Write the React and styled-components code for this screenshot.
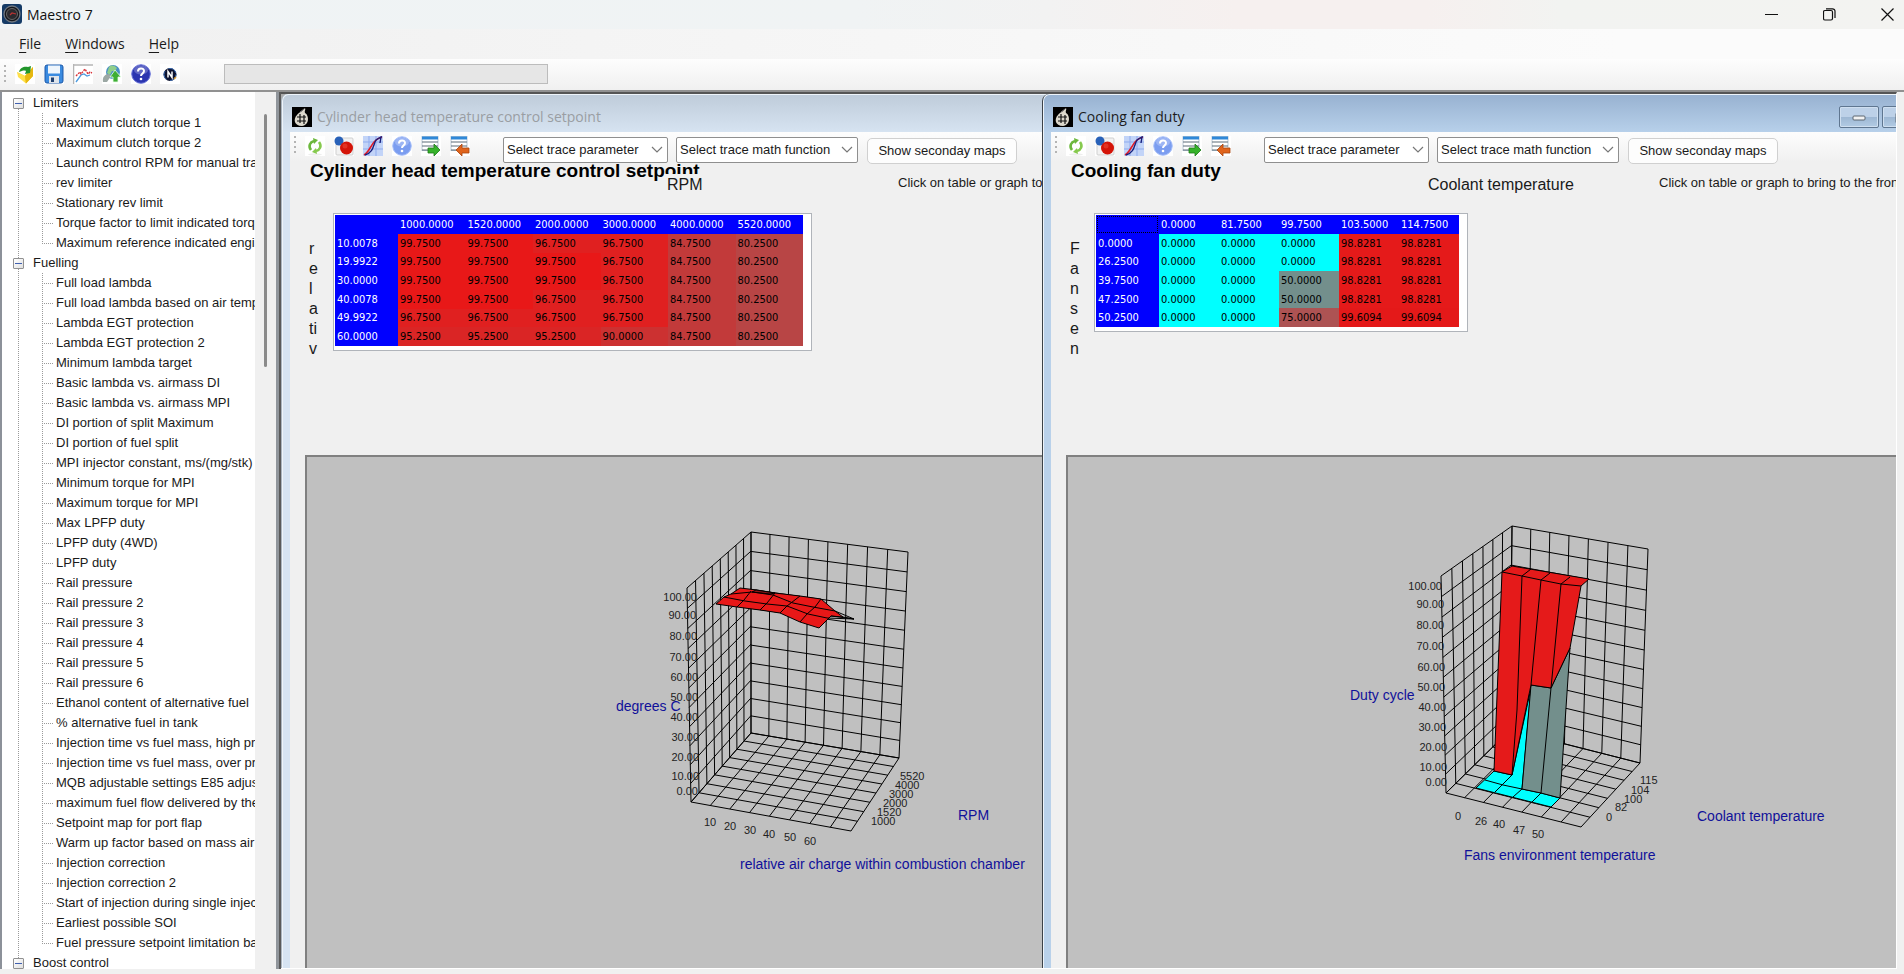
import React from "react";
import styled, { createGlobalStyle, css } from "styled-components";

const uiFont = `"Liberation Sans", Arial, sans-serif`;
const captionFont = `"Open Sans", "Noto Sans", sans-serif`;
const gridFont = `"DejaVu Sans Condensed", "DejaVu Sans", sans-serif`;

const GlobalStyle = createGlobalStyle`
  * { box-sizing: border-box; }
  body { margin: 0; background: #f0f0f0; font: 13px/20px ${uiFont}; color: #1a1a1a; }
  button, select { font: inherit; color: inherit; }
  ul { list-style: none; margin: 0; padding: 0; }
`;

const Frame = styled.div`
  display: flex;
  flex-direction: column;
  height: 100vh;
  overflow: hidden;
`;

const TitleBar = styled.header`
  display: flex;
  align-items: center;
  flex: none;
  height: 29px;
  padding: 0 1px 2px 2px;
  background: linear-gradient(90deg, #eff3f5 0%, #f0f3f4 45%, #f2f2f2 55%, #f6f0ef 65%, #f6f0ef 75%, #f2f3f1 82%, #f3f3f1 100%);
`;

const AppName = styled.h1`
  flex: 1;
  margin: 0 0 0 5px;
  padding-top: 2px;
  font: 400 14px/20px ${captionFont};
  color: #111;
`;

const CaptionButtons = styled.div`
  display: flex;
  gap: 26px;
`;

const CaptionButton = styled.button`
  display: flex;
  align-items: center;
  justify-content: center;
  width: 32px;
  height: 24px;
  padding: 2px 0 0;
  border: 0;
  background: transparent;
`;

const MenuBar = styled.nav`
  display: flex;
  flex: none;
  align-items: center;
  gap: 2px;
  height: 30px;
  padding-left: 8px;
  background: linear-gradient(90deg, #f0f0f0, #fbfbfb 85%);
`;

const MenuButton = styled.button`
  padding: 0 11px;
  border: 0;
  background: transparent;
  font: 14px/24px ${captionFont};

  u { text-underline-offset: 3px; }
`;

const MainToolbar = styled.div`
  display: flex;
  flex: none;
  align-items: center;
  height: 33px;
  padding: 0 0 1px 4px;
  border-bottom: 2px solid #919191;
  background: linear-gradient(#fdfdfd, #f0f0f0);
`;

const Grip = styled.span`
  width: 2px;
  height: 18px;
  background: repeating-linear-gradient(#b4b4b4 0 2px, transparent 2px 5px);
`;

const IconGroup = styled.div`
  display: flex;
  gap: 9px;
  margin: 0 ${(p) => p.$after}px 0 9px;
`;

const IconButton = styled.button`
  display: flex;
  width: 20px;
  height: 20px;
  padding: 0;
  border: 0;
  background: #fff;
`;

const Progress = styled.div`
  width: 324px;
  height: 20px;
  border: 1px solid #bcbcbc;
  background: #e6e6e6;
`;

const Workspace = styled.div`
  display: flex;
  flex: 1;
  min-height: 0;
  padding: 0 7px 5px 0;
`;

const Sidebar = styled.aside`
  display: flex;
  flex: none;
  width: 276px;
  border-left: 2px solid #8c9199;
  background: #f0f0f0;
`;

const Tree = styled.ul`
  flex: 1;
  min-width: 0;
  padding-top: 1px;
  overflow: hidden;
  background: #fff;
`;

const TreeGroup = styled.li`
  background: repeating-linear-gradient(#9a9a9a 0 1px, transparent 1px 2px) no-repeat 16px
    ${(p) => (p.$first ? "10px" : "0")} / 1px ${(p) => (p.$last ? "10px" : "100%")};
`;

const GroupLabel = styled.div`
  display: flex;
  align-items: center;
  height: 20px;
  padding-left: 11px;
`;

const Toggle = styled.button`
  display: flex;
  align-items: center;
  justify-content: center;
  width: 11px;
  height: 11px;
  margin-right: 9px;
  padding: 0;
  border: 1px solid #919191;
  border-radius: 1px;
  background: linear-gradient(135deg, #fff, #e0e0e0);

  &::before {
    content: "";
    width: 7px;
    height: 1px;
    background: #4060b0;
  }
`;

const Leaf = styled.li`
  height: 20px;
  margin-left: 40px;
  padding-left: 14px;
  white-space: nowrap;
  background:
    repeating-linear-gradient(#9a9a9a 0 1px, transparent 1px 2px) no-repeat 0 0 / 1px 100%,
    repeating-linear-gradient(90deg, #9a9a9a 0 1px, transparent 1px 2px) no-repeat 2px 10px / 10px 1px;

  &:last-child {
    background-size: 1px 11px, 10px 1px;
  }
`;

const ScrollTrack = styled.div`
  flex: none;
  width: 21px;
  padding: 22px 0 0 9px;
`;

const ScrollThumb = styled.div`
  width: 3px;
  height: 253px;
  border-radius: 2px;
  background: #8a8a8a;
`;

const Splitter = styled.div`
  flex: none;
  width: 5px;
  border-left: 3px solid #90959b;
  background: #5a5a5a;
`;

const Desktop = styled.main`
  position: relative;
  flex: 1;
  min-width: 0;
  overflow: hidden;
  border-top: 2px solid #555;
  border-right: 1px solid #fff;
  border-bottom: 1px solid #fff;
  background: #ababab;
`;

const ChildWindow = styled.section`
  position: absolute;
  top: 0;
  bottom: 0;
  left: ${(p) => p.$left}px;
  display: flex;
  flex-direction: column;
  width: 938px;
  border-left: 1px solid ${(p) => (p.$active ? "#3c4248" : "#aab4be")};
  border-radius: 7px 7px 0 0;
  background: ${(p) => (p.$active ? "#b9d1ea" : "#d7e4f2")};
  box-shadow: inset 1px 1px 0 #eef4fa;
`;

const WindowTitle = styled.header`
  display: flex;
  flex: none;
  align-items: center;
  gap: 5px;
  height: 37px;
  margin: 1px 1px 0;
  padding: 7px 14px 0 9px;
  border-radius: 6px 6px 0 0;
  background: ${(p) =>
    p.$active ? "linear-gradient(#98b2d1, #b7d0ea)" : "linear-gradient(#bfccda, #d6e3f1)"};

  h2 {
    flex: 1;
    margin: 0;
    font: 400 14px/24px ${captionFont};
    color: ${(p) => (p.$active ? "#1c1c1c" : "#9a9ea3")};
  }
`;

const FrameButtons = styled.div`
  display: flex;
  gap: 3px;
`;

const FrameButton = styled.button`
  display: flex;
  align-items: center;
  justify-content: center;
  width: 40px;
  height: 22px;
  padding: 2px 0 0;
  border: 1px solid #5f7690;
  border-radius: 2px;
  background: linear-gradient(#bdd1e8 50%, #9db7d3 50%, #b2cbe4);
  box-shadow: inset 0 0 0 1px #cfdff0;
`;

const WindowBody = styled.div`
  display: flex;
  flex: 1;
  flex-direction: column;
  min-height: 0;
  margin: 0 8px;
  background: #f0f0f0;
`;

const MapToolbar = styled.div`
  display: flex;
  flex: none;
  align-items: flex-start;
  height: 30px;
  padding: 4px 0 0 4px;
  background: linear-gradient(#fdfdfd, #f0f0f0);
`;

const ComboBox = styled.div`
  display: grid;
  flex: none;
  width: ${(p) => p.$width}px;
  height: 26px;
  margin: 1px 8px 0 0;

  select, svg { grid-area: 1 / 1; }
  select {
    appearance: none;
    width: 100%;
    padding: 0 20px 1px 3px;
    border: 1px solid #8f8f8f;
    border-radius: 2px;
    background: #fff;
  }
  svg {
    align-self: center;
    justify-self: end;
    margin-right: 5px;
    pointer-events: none;
  }
`;

const PushButton = styled.button`
  flex: none;
  width: 150px;
  height: 26px;
  margin: 2px 0 0 1px;
  padding: 0;
  border: 1px solid #d0d0d0;
  border-radius: 5px;
  background: #fdfdfd;
`;

const MapHeading = styled.h3`
  flex: none;
  margin: 0 0 0 20px;
  font: 700 19px/18px ${uiFont};
  color: #000;
`;

const AxisRow = styled.div`
  position: relative;
  display: flex;
  flex: none;
  height: 20px;
  margin: -6px 0 0 374px;
  white-space: nowrap;
`;

const ColumnAxis = styled.span`
  width: 234px;
  padding-left: 3px;
  background: #f0f0f0;
  font-size: 16px;
  line-height: 22px;
`;

const Hint = styled.span`
  line-height: 18px;
`;

const MapArea = styled.div`
  display: flex;
  flex: none;
  align-items: flex-start;
  height: 261px;
  padding: 19px 0 0 19px;
`;

const RowAxis = styled.div`
  display: flex;
  flex-direction: column;
  width: 24px;
  padding-top: 26px;
  font-size: 16px;
`;

const TableFrame = styled.div`
  padding: 1px 8px 4px 1px;
  border: 1px solid #b0b4ba;
  background: #fff;
`;

const MapTable = styled.table`
  width: ${(p) => p.$width}px;
  height: ${(p) => p.$height}px;
  border-collapse: collapse;
  table-layout: fixed;
  font: 11px/17px ${gridFont};
  color: #000;

  th, td { padding: 0 0 0 2px; text-align: left; font-weight: 400; }
  th { background: #00f; color: #fff; }
  th:first-child { width: 63px; }
  thead tr { height: 19px; }
`;

const CornerCell = styled.th`
  ${(p) =>
    p.$focused &&
    css`
      outline: 1px dotted #000;
      outline-offset: -2px;
    `}
`;

const ValueCell = styled.td`
  background: ${(p) => p.$tone};
`;

const GraphPanel = styled.div`
  flex: 1;
  min-height: 0;
  margin-left: 15px;
  overflow: hidden;
  border: solid #808080;
  border-width: 2px 0 0 2px;
  background: #c0c0c0;
`;

const Chart = styled.svg`
  display: block;

  .grid, .edge { fill: none; stroke: #000; stroke-width: 1; }
  .face { stroke: #000; stroke-width: 1; }
  .tick { font: 11px ${uiFont}; fill: #222; }
  .axis { font: 14px ${uiFont}; fill: #10109a; }
`;

/* ---------- icons ---------- */

const AppIcon = () => (
  <svg width="20" height="20" viewBox="0 0 20 20" aria-hidden="true">
    <rect width="20" height="20" rx="3" fill="#143a66" />
    <circle cx="10" cy="10" r="8" fill="#15171c" stroke="#6f7780" strokeWidth="1.3" />
    <circle cx="10" cy="10" r="5.5" fill="#2a2a2e" stroke="#666" />
    <path d="M8 11l2-2 4 1" stroke="#b33" strokeWidth="1.2" fill="none" />
  </svg>
);

const OpenIcon = () => (
  <svg width="20" height="20" viewBox="0 0 20 20" aria-hidden="true">
    <path d="M2 8l8 4 8-9v9l-7 7.500z" fill="#f0c818" />
    <path d="M2 8l8 4 1 7.500L3 13z" fill="#ffe04a" />
    <path d="M10 12l8-9v9l-7 7.500z" fill="#e6b810" />
    <path d="M4 8c1-5 6-6 9-5l3-1-1 7-5 1 1-3c-2-1-4 0-7 1z" fill="#22962c" />
  </svg>
);

const SaveIcon = () => (
  <svg width="20" height="20" viewBox="0 0 20 20" aria-hidden="true">
    <rect x="1" y="1" width="18" height="18" rx="2" fill="#3b8be0" stroke="#1c57a6" />
    <rect x="4" y="1.500" width="12" height="8" fill="#eef5fc" />
    <rect x="5" y="12" width="10" height="7" fill="#dfe4ea" />
    <rect x="7" y="13.500" width="3" height="4.500" fill="#1f3f70" />
  </svg>
);

const TraceIcon = () => (
  <svg width="20" height="20" viewBox="0 0 20 20" aria-hidden="true">
    <path d="M0 1h20M0.500 0v20" stroke="#b5b5b5" strokeWidth="1.5" />
    <path d="M3 18l5-7 3-1 3 2 3-1" stroke="#4a9be0" strokeWidth="1.3" fill="none" />
    <path d="M3 12l4-4 1 2 4-5 3 5 2-2 2 1" stroke="#d8333a" strokeWidth="1.4" fill="none" strokeDasharray="2 1" />
  </svg>
);

const WorldIcon = () => (
  <svg width="20" height="20" viewBox="0 0 20 20" aria-hidden="true">
    <circle cx="11" cy="8" r="7" fill="#4a8fc4" />
    <path d="M7 3c3-3 6-1 8 1l-2 3-3 0-2 4-3-2z" fill="#8fce8a" />
    <path d="M1 18c-1-5 2-8 6-8l2 2-4 6z" fill="#9ca8a4" />
    <path d="M13 6l6 7h-3v5h-5v-5H8z" fill="#3fae35" stroke="#e8ffe8" strokeWidth="0.800" />
  </svg>
);

const HelpIcon = ({ pale }) => (
  <svg width="20" height="20" viewBox="0 0 20 20" aria-hidden="true">
    <circle cx="10" cy="10" r="9.300" fill={pale ? "#7b9df0" : "#2b35b0"} stroke={pale ? "#a9c0f8" : "#6a74d8"} />
    <ellipse cx="10" cy="6" rx="7" ry="4.500" fill="#fff" opacity="0.250" />
    <path d="M7 7.500c0-4 6-4 6-.500 0 2.500-3 2.500-3 5" fill="none" stroke="#fff" strokeWidth="2" />
    <circle cx="10" cy="15" r="1.300" fill="#fff" />
  </svg>
);

const SyncIcon = () => (
  <svg width="20" height="20" viewBox="0 0 20 20" aria-hidden="true">
    <circle cx="10" cy="10.500" r="6.500" fill="#0e1430" />
    <circle cx="10" cy="10.500" r="6" fill="none" stroke="#3c6fb8" strokeDasharray="9 4" />
    <path d="M8 13.500v-6l4 6v-6" stroke="#fff" strokeWidth="1.500" fill="none" />
    <path d="M14 15l2-2" stroke="#d89c30" strokeWidth="1.5" />
  </svg>
);

const RefreshIcon = () => (
  <svg width="20" height="20" viewBox="0 0 20 20" aria-hidden="true">
    <ellipse cx="10" cy="18.500" rx="7" ry="1.200" fill="#eee" />
    <path d="M6 14c-3-4-1-8 3-9" fill="none" stroke="#6cb83c" strokeWidth="2.600" />
    <path d="M8 2l5 2-4 4z" fill="#6cb83c" />
    <path d="M14 6c3 4 1 8-3 9" fill="none" stroke="#86c94e" strokeWidth="2.600" />
    <path d="M12 18l-5-2 4-4z" fill="#86c94e" />
  </svg>
);

const SpheresIcon = () => (
  <svg width="20" height="20" viewBox="0 0 20 20" aria-hidden="true">
    <rect x="2" y="2" width="17" height="17" rx="1" fill="#f2f2f2" stroke="#cfcfcf" />
    <circle cx="5" cy="5" r="4.500" fill="#2861b8" />
    <circle cx="12.500" cy="12" r="6.500" fill="#d41408" />
    <circle cx="11" cy="10" r="2.500" fill="#f0503c" opacity="0.500" />
  </svg>
);

const CurvesIcon = () => (
  <svg width="20" height="20" viewBox="0 0 20 20" aria-hidden="true">
    <rect width="20" height="20" fill="#c2d4f8" />
    <path d="M0 6h20M0 13h20M6 0v20M13 0v20" stroke="#8fabee" />
    <path d="M1 19C8 15 8 4 19 1" stroke="#e01c28" strokeWidth="1.600" fill="none" />
    <path d="M2 19c9-3 8-10 11-15l5-3-1 6" stroke="#18207c" strokeWidth="1.400" fill="none" />
  </svg>
);

const SheetIcon = ({ back }) => (
  <svg width="20" height="20" viewBox="0 0 20 20" aria-hidden="true">
    <rect x="1" y="0.500" width="16" height="14" fill="#fff" stroke="#b9c8d4" />
    <path d="M1 2h16" stroke="#2f88d8" strokeWidth="3" />
    <path d="M1 6h16M1 10h16M1 14h16" stroke="#5d6c78" strokeWidth="1.200" />
    {back ? (
      <path d="M6 14l6-6v4h7v5h-7v3z" fill="#e0641c" stroke="#a8440c" strokeWidth="0.800" />
    ) : (
      <path d="M19 14l-6-6v4H7v5h6v3z" fill="#36b22a" stroke="#1c7a18" strokeWidth="0.800" />
    )}
  </svg>
);

const MapIcon = () => (
  <svg width="20" height="20" viewBox="0 0 20 20" aria-hidden="true">
    <rect width="20" height="20" fill="#000" />
    <path d="M13 1c1 2-1 3 0 5 4 2 5 12-3 13-8 0-9-7-5-11C7 5 10 5 13 1z" fill="#dcd8cc" />
    <path d="M5 10h9M5 14h9M8 7v9M12 8v9" stroke="#111" strokeWidth="1.200" />
    <path d="M8 5l4-3" stroke="#777" />
  </svg>
);

const Chevron = () => (
  <svg width="12" height="8" viewBox="0 0 12 8" aria-hidden="true">
    <path d="M1 1l5 5 5-5" fill="none" stroke="#777" strokeWidth="1.200" />
  </svg>
);

/* ---------- graph ---------- */

const bow = (t, k) => t + k * t * (1 - t);
const mix = (a, b, t) => [a[0] + (b[0] - a[0]) * t, a[1] + (b[1] - a[1]) * t];

// A quad [origin, end of u, end of v, far corner] ruled into nu by nv cells.
function ruledQuad([o, u, v, f], nu, nv, ku, kv) {
  const lines = [];
  for (let i = 0; i <= nu; i++) {
    const t = bow(i / nu, ku);
    lines.push([mix(o, u, t), mix(v, f, t)]);
  }
  for (let j = 0; j <= nv; j++) {
    const t = bow(j / nv, kv);
    lines.push([mix(o, v, t), mix(u, f, t)]);
  }
  return lines.map(([a, b]) => `M${a}L${b}`).join("");
}

function Cage({ backTop, rightTop, leftTop, back, right, left, front, n }) {
  return (
    <path
      className="grid"
      d={
        ruledQuad([backTop, rightTop, back, right], n, 11, -0.04, 0.07) +
        ruledQuad([backTop, leftTop, back, left], n, 11, -0.08, 0.05) +
        ruledQuad([back, right, left, front], n, n, -0.04, -0.08)
      }
    />
  );
}

const TemperatureGraph = () => (
  <Chart width="750" height="520" viewBox="307 457 750 520" role="img" aria-label="Cylinder head temperature graph">
    <g transform="translate(600 510)">
      <Cage
        n={8}
        backTop={[151, 22]}
        rightTop={[308, 42]}
        leftTop={[87, 78]}
        back={[151, 223]}
        right={[299, 248]}
        left={[91, 292]}
        front={[251, 321]}
      />
      <path
        className="face"
        fill="#e81818"
        d="M116 94L124 87L131 84L140 78L157 80L175 83L200 86L221 89L235 101L243 107L231 106L219 118L200 112L180 103L160 100L137 97Z"
      />
      <path className="face" fill="#8c1616" d="M156 80L175 83L170 84L152 82Z" />
      <path
        className="edge"
        d="M124 87L145 91L167 94L187 96L208 104L227 108L254 109L243 107M131 84L152 82L173 85L193 93L213 97L235 101L254 109M137 97L144 90L151 81M160 100L167 93L175 83M180 103L187 96L200 86M200 112L207 104L215 97L221 89M231 106L254 109"
      />
      {[
        ["100.00", 97, 91], ["90.00", 96, 109], ["80.00", 97, 130], ["70.00", 97, 151], ["60.00", 98, 171],
        ["50.00", 98, 191], ["40.00", 98, 211], ["30.00", 99, 231], ["20.00", 99, 251], ["10.00", 99, 270], ["0.00", 98, 285],
      ].map(([t, x, y]) => (
        <text key={t} className="tick" textAnchor="end" x={x} y={y}>{t}</text>
      ))}
      {[["10", 104, 316], ["20", 124, 320], ["30", 144, 324], ["40", 163, 328], ["50", 184, 331], ["60", 204, 335]].map(([t, x, y]) => (
        <text key={t} className="tick" x={x} y={y}>{t}</text>
      ))}
      {[["5520", 300, 270], ["4000", 295, 279], ["3000", 289, 288], ["2000", 283, 297], ["1520", 277, 306], ["1000", 271, 315]].map(([t, x, y]) => (
        <text key={t} className="tick" x={x} y={y}>{t}</text>
      ))}
      <text className="axis" x="16" y="201">degrees C</text>
      <text className="axis" x="358" y="310">RPM</text>
      <text className="axis" x="140" y="359">relative air charge within combustion chamber</text>
    </g>
  </Chart>
);

const FanGraph = () => (
  <Chart width="860" height="520" viewBox="1068 457 860 520" role="img" aria-label="Cooling fan duty graph">
    <g transform="translate(1330 510)">
      <Cage
        n={7}
        backTop={[182, 16]}
        rightTop={[318, 39]}
        leftTop={[111, 66]}
        back={[180, 220]}
        right={[310, 253]}
        left={[116, 283]}
        front={[251, 317]}
      />
      <path className="face" fill="#00ffff" d="M146 278L164 261L182 265L201 178L192 279L211 283L230 288L221 297Z" />
      <path className="edge" d="M155 270L173 275L192 279M165 282L182 265M183 287L192 279M202 292L211 283" />
      <path className="face" fill="#738f8c" d="M201 175L221 178L240 138L230 288L211 283L192 279Z" />
      <path className="edge" d="M211 283L221 178" />
      <path
        className="face"
        fill="#e51a1a"
        d="M182 56L259 69L251 76L245 110L240 138L221 178L201 175L182 265L164 261L172 62Z"
      />
      <path
        className="edge"
        d="M172 62L192 66L211 70L231 74L251 76M192 66L201 59M211 70L220 63M231 74L240 67M192 66L187 200L182 265M211 70L201 175M231 74L221 178"
      />
      {[
        ["100.00", 112, 80], ["90.00", 114, 98], ["80.00", 114, 119], ["70.00", 114, 140], ["60.00", 115, 161],
        ["50.00", 115, 181], ["40.00", 116, 201], ["30.00", 116, 221], ["20.00", 117, 241], ["10.00", 117, 261], ["0.00", 117, 276],
      ].map(([t, x, y]) => (
        <text key={t} className="tick" textAnchor="end" x={x} y={y}>{t}</text>
      ))}
      {[["0", 125, 310], ["26", 145, 315], ["40", 163, 318], ["47", 183, 324], ["50", 202, 328]].map(([t, x, y]) => (
        <text key={t} className="tick" x={x} y={y}>{t}</text>
      ))}
      {[["115", 310, 274], ["104", 301, 284], ["100", 294, 293], ["82", 285, 301], ["0", 276, 311]].map(([t, x, y]) => (
        <text key={t} className="tick" x={x} y={y}>{t}</text>
      ))}
      <text className="axis" x="20" y="190">Duty cycle</text>
      <text className="axis" x="367" y="311">Coolant temperature</text>
      <text className="axis" x="134" y="350">Fans environment temperature</text>
    </g>
  </Chart>
);

/* ---------- data ---------- */

const tree = [
  {
    name: "Limiters",
    items: [
      "Maximum clutch torque 1", "Maximum clutch torque 2", "Launch control RPM for manual transmission", "rev limiter",
      "Stationary rev limit", "Torque factor to limit indicated torque", "Maximum reference indicated engine torque",
    ],
  },
  {
    name: "Fuelling",
    items: [
      "Full load lambda", "Full load lambda based on air temperature", "Lambda EGT protection", "Lambda EGT protection 2",
      "Minimum lambda target", "Basic lambda vs. airmass DI", "Basic lambda vs. airmass MPI", "DI portion of split Maximum",
      "DI portion of fuel split", "MPI injector constant, ms/(mg/stk)", "Minimum torque for MPI", "Maximum torque for MPI",
      "Max LPFP duty", "LPFP duty (4WD)", "LPFP duty", "Rail pressure", "Rail pressure 2", "Rail pressure 3",
      "Rail pressure 4", "Rail pressure 5", "Rail pressure 6", "Ethanol content of alternative fuel",
      "% alternative fuel in tank", "Injection time vs fuel mass, high pressure", "Injection time vs fuel mass, over pressure",
      "MQB adjustable settings E85 adjustment", "maximum fuel flow delivered by the pump", "Setpoint map for port flap",
      "Warm up factor based on mass air", "Injection correction", "Injection correction 2",
      "Start of injection during single injection", "Earliest possible SOI", "Fuel pressure setpoint limitation based",
    ],
  },
  { name: "Boost control", items: [] },
];

const tones = {
  "99.7500": "#e81818", "96.7500": "#e02020", "95.2500": "#da2525", "90.0000": "#cc3131",
  "84.7500": "#c23a3a", "80.2500": "#b84545", "0.0000": "#00ffff", "50.0000": "#738f8c",
  "75.0000": "#ad5353", "98.8281": "#e51a1a", "99.6094": "#e41919",
};

const cylinderMap = {
  columns: ["1000.0000", "1520.0000", "2000.0000", "3000.0000", "4000.0000", "5520.0000"],
  rows: [
    ["10.0078", "99.7500", "99.7500", "96.7500", "96.7500", "84.7500", "80.2500"],
    ["19.9922", "99.7500", "99.7500", "99.7500", "96.7500", "84.7500", "80.2500"],
    ["30.0000", "99.7500", "99.7500", "99.7500", "96.7500", "84.7500", "80.2500"],
    ["40.0078", "99.7500", "99.7500", "96.7500", "96.7500", "84.7500", "80.2500"],
    ["49.9922", "96.7500", "96.7500", "96.7500", "96.7500", "84.7500", "80.2500"],
    ["60.0000", "95.2500", "95.2500", "95.2500", "90.0000", "84.7500", "80.2500"],
  ],
};

const fanMap = {
  columns: ["0.0000", "81.7500", "99.7500", "103.5000", "114.7500"],
  rows: [
    ["0.0000", "0.0000", "0.0000", "0.0000", "98.8281", "98.8281"],
    ["26.2500", "0.0000", "0.0000", "0.0000", "98.8281", "98.8281"],
    ["39.7500", "0.0000", "0.0000", "50.0000", "98.8281", "98.8281"],
    ["47.2500", "0.0000", "0.0000", "50.0000", "98.8281", "98.8281"],
    ["50.2500", "0.0000", "0.0000", "75.0000", "99.6094", "99.6094"],
  ],
};

/* ---------- parts ---------- */

function Combo({ label, width }) {
  return (
    <ComboBox $width={width}>
      <select aria-label={label}>
        <option>{label}</option>
      </select>
      <Chevron />
    </ComboBox>
  );
}

function MapWindow({ title, left, active, columnAxis, rowAxis, map, width, height, children }) {
  return (
    <ChildWindow $left={left} $active={active}>
      <WindowTitle $active={active}>
        <MapIcon />
        <h2>{title}</h2>
        {active && (
          <FrameButtons>
            <FrameButton aria-label="Minimize">
              <svg width="14" height="6" viewBox="0 0 14 6"><rect x="1" y="1" width="12" height="4" rx="1" fill="#f2f2f2" stroke="#5d6670" /></svg>
            </FrameButton>
            <FrameButton aria-label="Maximize">
              <svg width="14" height="12" viewBox="0 0 14 12"><rect x="1" y="1" width="12" height="10" rx="1" fill="#f2f2f2" stroke="#5d6670" /></svg>
            </FrameButton>
            <FrameButton aria-label="Close">
              <svg width="12" height="12" viewBox="0 0 12 12"><path d="M1 1l10 10M11 1L1 11" stroke="#5d6670" strokeWidth="2" /></svg>
            </FrameButton>
          </FrameButtons>
        )}
      </WindowTitle>
      <WindowBody>
        <MapToolbar>
          <Grip />
          <IconGroup $after={33}>
            <IconButton aria-label="Refresh"><RefreshIcon /></IconButton>
            <IconButton aria-label="Compare"><SpheresIcon /></IconButton>
            <IconButton aria-label="Curves"><CurvesIcon /></IconButton>
            <IconButton aria-label="Help"><HelpIcon pale /></IconButton>
            <IconButton aria-label="Export"><SheetIcon /></IconButton>
            <IconButton aria-label="Import"><SheetIcon back /></IconButton>
          </IconGroup>
          <Combo label="Select trace parameter" width={165} />
          <Combo label="Select trace math function" width={182} />
          <PushButton>Show seconday maps</PushButton>
        </MapToolbar>
        <MapHeading>{title}</MapHeading>
        <AxisRow>
          <ColumnAxis>{columnAxis}</ColumnAxis>
          <Hint>Click on table or graph to bring to the front</Hint>
        </AxisRow>
        <MapArea>
          <RowAxis>
            {rowAxis.map((part, i) => <span key={i}>{part}</span>)}
          </RowAxis>
          <TableFrame>
            <MapTable $width={width} $height={height}>
              <thead>
                <tr>
                  <CornerCell $focused={active} />
                  {map.columns.map((c) => <th key={c} scope="col">{c}</th>)}
                </tr>
              </thead>
              <tbody>
                {map.rows.map(([head, ...cells]) => (
                  <tr key={head}>
                    <th scope="row">{head}</th>
                    {cells.map((v, i) => <ValueCell key={i} $tone={tones[v]}>{v}</ValueCell>)}
                  </tr>
                ))}
              </tbody>
            </MapTable>
          </TableFrame>
        </MapArea>
        <GraphPanel>{children}</GraphPanel>
      </WindowBody>
    </ChildWindow>
  );
}

export default function App() {
  return (
    <Frame>
      <GlobalStyle />
      <TitleBar>
        <AppIcon />
        <AppName>Maestro 7</AppName>
        <CaptionButtons>
          <CaptionButton aria-label="Minimize">
            <svg width="13" height="13" viewBox="0 0 13 13"><path d="M0 6.500h13" stroke="#111" /></svg>
          </CaptionButton>
          <CaptionButton aria-label="Restore">
            <svg width="13" height="13" viewBox="0 0 13 13">
              <rect x="0.500" y="2.500" width="9" height="9.500" rx="1.500" fill="none" stroke="#111" strokeWidth="1.200" />
              <path d="M3 .800h6.500a2.500 2.500 0 0 1 2.500 2.500V10" fill="none" stroke="#111" strokeWidth="1.200" />
            </svg>
          </CaptionButton>
          <CaptionButton aria-label="Close">
            <svg width="13" height="13" viewBox="0 0 13 13"><path d="M.500.500l12 12M12.500.500l-12 12" stroke="#111" strokeWidth="1.200" /></svg>
          </CaptionButton>
        </CaptionButtons>
      </TitleBar>
      <MenuBar>
        <MenuButton><u>F</u>ile</MenuButton>
        <MenuButton><u>W</u>indows</MenuButton>
        <MenuButton><u>H</u>elp</MenuButton>
      </MenuBar>
      <MainToolbar>
        <Grip />
        <IconGroup $after={44}>
          <IconButton aria-label="Open"><OpenIcon /></IconButton>
          <IconButton aria-label="Save"><SaveIcon /></IconButton>
          <IconButton aria-label="Traces"><TraceIcon /></IconButton>
          <IconButton aria-label="Update"><WorldIcon /></IconButton>
          <IconButton aria-label="Help"><HelpIcon /></IconButton>
          <IconButton aria-label="Sync"><SyncIcon /></IconButton>
        </IconGroup>
        <Progress role="progressbar" aria-label="Progress" aria-valuenow={0} />
      </MainToolbar>
      <Workspace>
        <Sidebar>
          <Tree>
            {tree.map((group, i) => (
              <TreeGroup key={group.name} $first={i === 0} $last={i === tree.length - 1}>
                <GroupLabel>
                  <Toggle aria-label={`Collapse ${group.name}`} />
                  {group.name}
                </GroupLabel>
                <ul>
                  {group.items.map((item) => <Leaf key={item}>{item}</Leaf>)}
                </ul>
              </TreeGroup>
            ))}
          </Tree>
          <ScrollTrack><ScrollThumb /></ScrollTrack>
        </Sidebar>
        <Splitter />
        <Desktop>
          <MapWindow
            title="Cylinder head temperature control setpoint"
            left={0}
            columnAxis="RPM"
            rowAxis={["r", "e", "l", "a", "ti", "v"]}
            map={cylinderMap}
            width={468}
            height={131}
          >
            <TemperatureGraph />
          </MapWindow>
          <MapWindow
            title="Cooling fan duty"
            left={761}
            active
            columnAxis="Coolant temperature"
            rowAxis={["F", "a", "n", "s", "e", "n"]}
            map={fanMap}
            width={363}
            height={112}
          >
            <FanGraph />
          </MapWindow>
        </Desktop>
      </Workspace>
    </Frame>
  );
}
